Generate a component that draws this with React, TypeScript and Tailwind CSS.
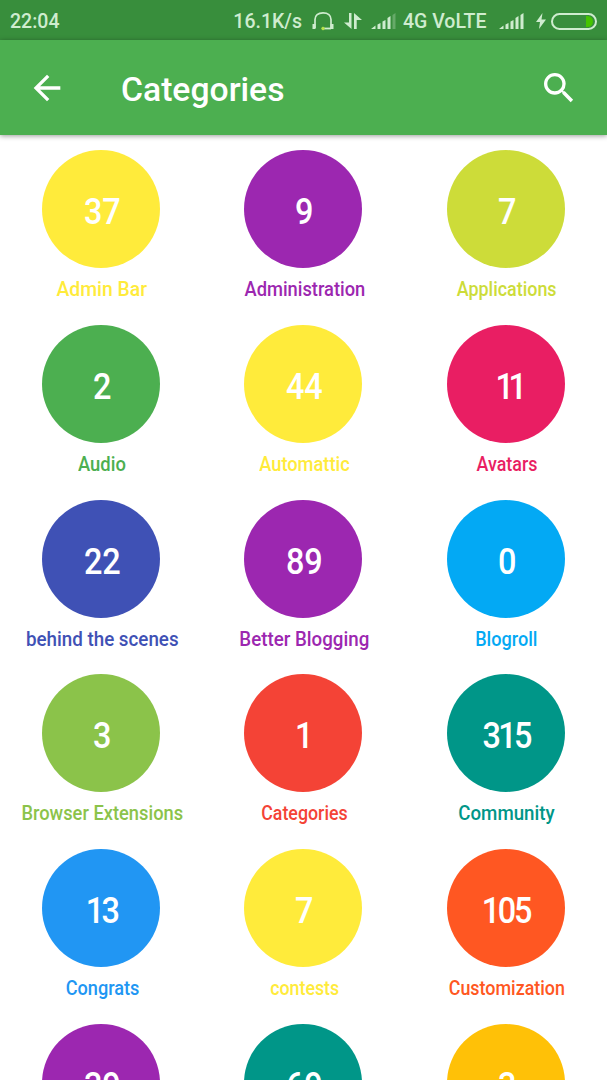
type Category = { count: number; name: string; bg: string; text: string; fit: string; digits?: string };

const categories: Category[] = [
  { count: 37, name: 'Admin Bar', bg: 'bg-[#ffeb3b]', text: 'text-[#ffeb3b]', fit: 'scale-x-[0.968]' },
  { count: 9, name: 'Administration', bg: 'bg-[#9c27b0]', text: 'text-[#9c27b0]', fit: 'scale-x-[0.915]' },
  { count: 7, name: 'Applications', bg: 'bg-[#cddc39]', text: 'text-[#cddc39]', fit: 'scale-x-[0.895]' },
  { count: 2, name: 'Audio', bg: 'bg-[#4caf50]', text: 'text-[#4caf50]', fit: 'scale-x-[0.92]' },
  { count: 44, name: 'Automattic', bg: 'bg-[#ffeb3b]', text: 'text-[#ffeb3b]', fit: 'scale-x-[0.913]' },
  { count: 11, name: 'Avatars', bg: 'bg-[#e91e63]', text: 'text-[#e91e63]', fit: 'scale-x-[0.895]', digits: 'tracking-[-6px] pl-0 -mr-[6px]' },
  { count: 22, name: 'behind the scenes', bg: 'bg-[#3f51b5]', text: 'text-[#3f51b5]', fit: 'scale-x-[0.939]' },
  { count: 89, name: 'Better Blogging', bg: 'bg-[#9c27b0]', text: 'text-[#9c27b0]', fit: 'scale-x-[0.937]' },
  { count: 0, name: 'Blogroll', bg: 'bg-[#03a9f4]', text: 'text-[#03a9f4]', fit: 'scale-x-[0.905]' },
  { count: 3, name: 'Browser Extensions', bg: 'bg-[#8bc34a]', text: 'text-[#8bc34a]', fit: 'scale-x-[0.915]' },
  { count: 1, name: 'Categories', bg: 'bg-[#f44336]', text: 'text-[#f44336]', fit: 'scale-x-[0.89]' },
  { count: 315, name: 'Community', bg: 'bg-[#009688]', text: 'text-[#009688]', fit: 'scale-x-[0.935]', digits: 'tracking-[-3px] pl-0' },
  { count: 13, name: 'Congrats', bg: 'bg-[#2196f3]', text: 'text-[#2196f3]', fit: 'scale-x-[0.907]', digits: 'tracking-[-3px] pl-0' },
  { count: 7, name: 'contests', bg: 'bg-[#ffeb3b]', text: 'text-[#ffeb3b]', fit: 'scale-x-[0.89]' },
  { count: 105, name: 'Customization', bg: 'bg-[#ff5722]', text: 'text-[#ff5722]', fit: 'scale-x-[0.895]', digits: 'tracking-[-2.500px] pl-0' },
  { count: 39, name: '', bg: 'bg-[#9c27b0]', text: 'text-[#9c27b0]', fit: '' },
  { count: 69, name: '', bg: 'bg-[#009688]', text: 'text-[#009688]', fit: '' },
  { count: 3, name: '', bg: 'bg-[#ffc107]', text: 'text-[#ffc107]', fit: '' },
];

function Headphones() {
  return (
    <svg className="ml-[10px] h-5 w-[22px] shrink-0" viewBox="0 0 22 20" fill="none" stroke="currentColor">
      <path d="M3 17V8.500C3 4.500 6 1.800 11 1.800s8 2.700 8 6.700V17" strokeWidth="1.7" />
      <path d="M2 13v5M20 13v5" strokeWidth="3" />
      <path d="M11 17.500h8" strokeWidth="1.800" />
      <circle cx="11" cy="17.500" r="1.300" fill="#b6e34a" stroke="#b6e34a" />
    </svg>
  );
}

function DataArrows() {
  return (
    <svg className="ml-[10px] h-[18px] w-[18px] shrink-0" viewBox="0 0 18 18" fill="currentColor">
      <path d="M5 1h2.500v16L0 10.500h5z" />
      <path d="M10 1l8 7h-5.300v9H10z" />
    </svg>
  );
}

function Signal({ className, weak }: { className: string; weak?: boolean }) {
  return (
    <svg className={`h-[18px] w-[25px] shrink-0 ${className}`} viewBox="0 0 25 18" fill="currentColor">
      <path d="M0 17l4.500-3.500V17zM6.500 12.500l3-1.500v6h-3zM11.500 9.500l3-1.500v9h-3zM16.500 6l3-2v13h-3z" />
      <path d="M21.500 3l3-2v16h-3z" opacity={weak ? 0.3 : 1} />
    </svg>
  );
}

function StatusBar() {
  return (
    <div className="flex h-10 items-center bg-[#388e3c] pt-[2px] pr-[10px] pl-[10px] text-[19.500px] leading-none font-[550] whitespace-nowrap text-[#cfeccf]">
      <span className="pt-px">22:04</span>
      <span className="ml-auto pt-px">16.1K/s</span>
      <Headphones />
      <DataArrows />
      <Signal className="ml-[9px]" weak />
      <span className="ml-[7px] w-[86px] pt-px">4G VoLTE</span>
      <Signal className="ml-[10px]" />
      <svg className="ml-[12px] h-4 w-[10px] shrink-0" viewBox="0 0 10 16" fill="currentColor">
        <path d="M6.500 0L0 9h4L3 16l7-9.500H5.500z" />
      </svg>
      <div className="ml-[5px] flex h-[17px] w-[46px] shrink-0 items-center justify-end rounded-full border-2 border-[#cfeccf] pr-[2px]">
        <div className="h-[11px] w-[7px] rounded-r-full bg-[#45c400]" />
      </div>
    </div>
  );
}

function Toolbar() {
  return (
    <header className="z-10 flex h-[95px] items-center bg-[#4caf50] pr-[28px] pl-[27px] text-white shadow-[0_1px_5px_rgba(0,0,0,0.4)]">
      <svg className="h-10 w-10 shrink-0" viewBox="0 0 24 24" fill="currentColor">
        <path d="M20 11H7.830l5.590-5.590L12 4l-8 8 8 8 1.410-1.410L7.830 13H20v-2z" />
      </svg>
      <h1 className="mt-1 ml-[54px] text-[33.700px] leading-none font-medium">Categories</h1>
      <svg className="ml-auto h-10 w-10 shrink-0" viewBox="0 0 24 24" fill="currentColor">
        <path d="M15.500 14h-.79l-.28-.27A6.471 6.471 0 0 0 16 9.500 6.500 6.500 0 1 0 9.500 16c1.610 0 3.090-.59 4.230-1.570l.27.280v.79l5 4.990L20.490 19l-4.990-5zm-6 0C7.010 14 5 11.990 5 9.500S7.010 5 9.500 5 14 7.010 14 9.500 11.990 14 9.500 14z" />
      </svg>
    </header>
  );
}

function CategoryTile({ item }: { item: Category }) {
  return (
    <div className="flex h-[174.670px] flex-col items-center">
      <div className={`flex size-[118px] shrink-0 items-center justify-center rounded-full pt-[6px] text-[36px] leading-none font-medium text-white ${item.bg}`}>
        <span className={`scale-x-[0.9] ${item.digits ?? 'pl-0.5'}`}>{item.count}</span>
      </div>
      <div className={`mt-[9px] pl-0.5 text-[20px] leading-6 font-medium whitespace-nowrap ${item.text} ${item.fit}`}>{item.name}</div>
    </div>
  );
}

export default function App() {
  return (
    <div className="flex h-[1080px] w-[607px] flex-col overflow-hidden bg-white font-['Roboto',sans-serif]">
      <StatusBar />
      <Toolbar />
      <main className="grid min-h-0 flex-1 grid-cols-3 content-start overflow-hidden pt-[15.300px]">
        {categories.map((item, i) => (
          <CategoryTile key={i} item={item} />
        ))}
      </main>
    </div>
  );
}
